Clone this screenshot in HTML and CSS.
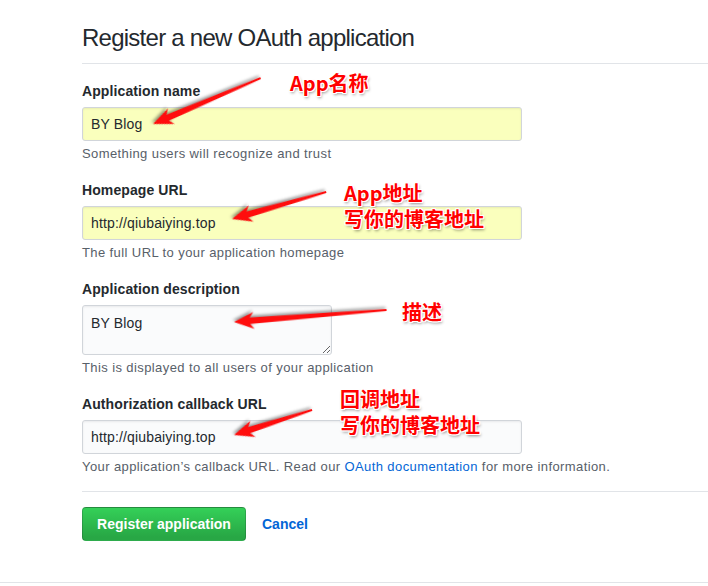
FILE: index.html
```html
<!DOCTYPE html>
<html lang="en">
<head>
<meta charset="utf-8">
<title>Register a new OAuth application</title>
<link rel="stylesheet" href="styles.css">
</head>
<body>
<div class="page">
  <div class="main">
    <div class="subhead">
      <h1 class="subhead-title">Register a new OAuth application</h1>
    </div>
    <form class="form">
      <div class="form-group">
        <label class="form-label">Application name</label>
        <input class="form-control wide autofill" type="text" value="BY Blog">
        <p class="note">Something users will recognize and trust</p>
      </div>
      <div class="form-group">
        <label class="form-label">Homepage URL</label>
        <input class="form-control wide autofill" type="text" value="http://qiubaiying.top">
        <p class="note">The full URL to your application homepage</p>
      </div>
      <div class="form-group">
        <label class="form-label">Application description</label>
        <textarea class="form-control short">BY Blog</textarea>
        <p class="note">This is displayed to all users of your application</p>
      </div>
      <div class="form-group">
        <label class="form-label">Authorization callback URL</label>
        <input class="form-control wide" type="text" value="http://qiubaiying.top">
        <p class="note">Your application’s callback URL. Read our <a class="link" href="#">OAuth documentation</a> for more information.</p>
      </div>
      <div class="actions">
        <button class="btn-primary" type="button">Register application</button>
        <a class="btn-link" href="#">Cancel</a>
      </div>
    </form>
  </div>
  <div class="footer-line"></div>

  <svg class="arrows" width="708" height="586" viewBox="0 0 708 586">
    <g class="arrow" transform="translate(153,124) rotate(156.9)">
      <polygon points="0,0 -20,-8.5 -16,-3.2 -117,-1 -117,1 -16,3.2 -20,8.5"/>
    </g>
    <g class="arrow" transform="translate(232,219) rotate(164)">
      <polygon points="0,0 -20,-8.5 -16,-3.2 -98,-1 -98,1 -16,3.2 -20,8.5"/>
    </g>
    <g class="arrow" transform="translate(234,322) rotate(175.5)">
      <polygon points="0,0 -20,-8.5 -16,-3.2 -153,-1 -153,1 -16,3.2 -20,8.5"/>
    </g>
    <g class="arrow" transform="translate(234,435) rotate(162.2)">
      <polygon points="0,0 -20,-8.5 -16,-3.2 -82,-1 -82,1 -16,3.2 -20,8.5"/>
    </g>
  </svg>

  <div class="callout c1"><span class="callout-line">App名称</span></div>
  <div class="callout c2"><span class="callout-line">App地址</span><span class="callout-line">写你的博客地址</span></div>
  <div class="callout c3"><span class="callout-line">描述</span></div>
  <div class="callout c4"><span class="callout-line">回调地址</span><span class="callout-line">写你的博客地址</span></div>
</div>
</body>
</html>
```

FILE: styles.css
```css
html, body {
  margin: 0;
  padding: 0;
  background: #ffffff;
}

body {
  font-family: "Liberation Sans", Arial, sans-serif;
  color: #24292e;
  font-size: 14px;
  line-height: 1.5;
}

.page {
  position: relative;
  width: 708px;
  height: 586px;
  overflow: hidden;
}

.main {
  padding-left: 82px;
  padding-top: 23px;
}

.subhead {
  border-bottom: 1px solid #e1e4e8;
  padding-bottom: 10px;
}

.subhead-title {
  margin: 0;
  font-size: 24px;
  font-weight: 400;
  line-height: 30px;
  letter-spacing: -0.75px;
  color: #24292e;
}

.form {
  display: flex;
  flex-direction: column;
}

.form-group {
  margin-top: 17px;
  display: flex;
  flex-direction: column;
  align-items: flex-start;
}

.form-label {
  font-weight: 700;
  font-size: 14px;
  line-height: 20px;
  margin-bottom: 6px;
  letter-spacing: 0.1px;
}

.form-control {
  box-sizing: border-box;
  font-family: "Liberation Sans", Arial, sans-serif;
  font-size: 14px;
  line-height: 20px;
  letter-spacing: 0.15px;
  color: #24292e;
  padding: 6px 8px;
  min-height: 34px;
  background-color: #fafbfc;
  border: 1px solid #d1d5da;
  border-radius: 3px;
  box-shadow: inset 0 1px 2px rgba(27, 31, 35, 0.075);
  margin: 0;
  outline: none;
}

.wide {
  width: 440px;
  height: 34px;
}

.autofill {
  background-color: #faffbd;
}

.short {
  width: 250px;
  height: 50px;
  padding-top: 7px;
  resize: vertical;
  display: block;
}

.note {
  margin: 4px 0 0;
  font-size: 13px;
  line-height: 18px;
  letter-spacing: 0.4px;
  color: #586069;
}

.link {
  color: #0366d6;
  text-decoration: none;
}

.actions {
  margin-top: 15px;
  border-top: 1px solid #e1e4e8;
  padding-top: 15px;
  display: flex;
  align-items: center;
}

.btn-primary {
  font-family: "Liberation Sans", Arial, sans-serif;
  font-size: 14px;
  font-weight: 700;
  line-height: 20px;
  color: #ffffff;
  padding: 6px 12px;
  width: 164px;
  height: 34px;
  box-sizing: border-box;
  background-image: linear-gradient(-180deg, #34d058 0%, #28a745 90%);
  border: 1px solid rgba(27, 31, 35, 0.2);
  border-radius: 4px;
  cursor: pointer;
}

.btn-link {
  margin-left: 16px;
  color: #0366d6;
  font-weight: 700;
  text-decoration: none;
  font-size: 14px;
}

.footer-line {
  position: absolute;
  left: 0;
  right: 0;
  top: 582px;
  border-top: 1px solid #e1e4e8;
}

.arrows {
  position: absolute;
  left: 0;
  top: 0;
  pointer-events: none;
}

.arrow polygon {
  fill: #ff0d0d;
  filter: drop-shadow(1px 2px 1.5px rgba(0, 0, 0, 0.4));
}

.callout {
  position: absolute;
  display: flex;
  flex-direction: column;
  gap: 2px;
  font-family: "Noto Sans CJK SC", "Liberation Sans", sans-serif;
  font-weight: 700;
  font-size: 20px;
  color: #ff0000;
  white-space: nowrap;
  text-shadow:
    -1px 0 0 #fff, 1px 0 0 #fff, 0 -1px 0 #fff, 0 1px 0 #fff,
    -1px -1px 0 #fff, 1px 1px 0 #fff, -1px 1px 0 #fff, 1px -1px 0 #fff,
    1px 2px 3px rgba(0, 0, 0, 0.45);
}

.callout-line {
  display: block;
  line-height: 24px;
  height: 24px;
}

.c1 { left: 290px; top: 71px; }
.c2 { left: 344px; top: 181px; }
.c3 { left: 402px; top: 300px; }
.c4 { left: 340px; top: 387px; }
```
